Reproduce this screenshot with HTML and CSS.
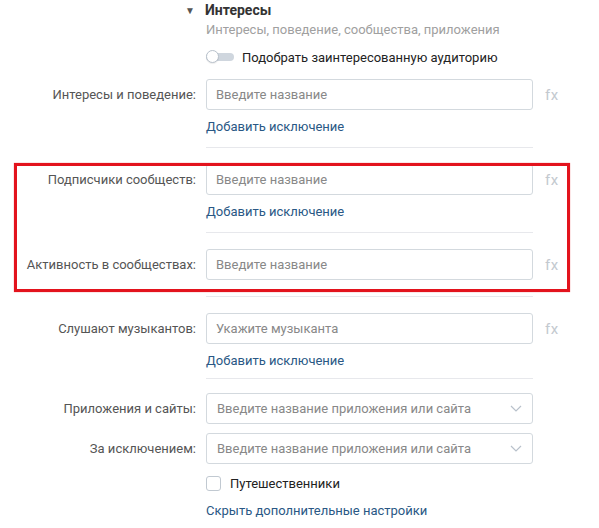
FILE: index.html
```html
<!DOCTYPE html>
<html lang="ru">
<head>
    <meta charset="UTF-8">
    <meta name="viewport" content="width=device-width, initial-scale=1.0">
    <title>Интересы</title>
    <link rel="stylesheet" href="styles.css">
</head>
<body>
    <div id="form">
        <!-- Section header -->
        <div class="head">
            <span class="head-arrow">&#9660;</span>
            <span class="head-title">Интересы</span>
        </div>
        <div class="head-sub">Интересы, поведение, сообщества, приложения</div>
        <div class="switch-row">
            <span class="switch"><span class="switch-knob"></span></span>
            <span>Подобрать заинтересованную аудиторию</span>
        </div>

        <div class="group">
            <div class="field">
                <label class="field-label">Интересы и поведение:</label>
                <input class="field-input" type="text" placeholder="Введите название">
                <span class="fx">fx</span>
            </div>
            <div class="field-sub"><a href="#" class="link">Добавить исключение</a></div>
            <div class="divider"></div>
        </div>

        <div class="group">
            <div class="field">
                <label class="field-label">Подписчики сообществ:</label>
                <input class="field-input" type="text" placeholder="Введите название">
                <span class="fx">fx</span>
            </div>
            <div class="field-sub"><a href="#" class="link">Добавить исключение</a></div>
            <div class="divider"></div>
        </div>

        <div class="group">
            <div class="field">
                <label class="field-label">Активность в сообществах:</label>
                <input class="field-input" type="text" placeholder="Введите название">
                <span class="fx">fx</span>
            </div>
            <div class="divider divider-tight"></div>
        </div>

        <div class="group">
            <div class="field">
                <label class="field-label">Слушают музыкантов:</label>
                <input class="field-input" type="text" placeholder="Укажите музыканта">
                <span class="fx">fx</span>
            </div>
            <div class="field-sub"><a href="#" class="link">Добавить исключение</a></div>
            <div class="divider divider-short"></div>
        </div>

        <div class="field">
            <label class="field-label">Приложения и сайты:</label>
            <div class="select">
                <span>Введите название приложения или сайта</span>
                <svg class="select-arrow" width="12" height="7" viewBox="0 0 12 7"><path d="M1 1l5 5 5-5" fill="none" stroke="#b8c1cb" stroke-width="1.2"/></svg>
            </div>
        </div>
        <div class="field field-next">
            <label class="field-label">За исключением:</label>
            <div class="select">
                <span>Введите название приложения или сайта</span>
                <svg class="select-arrow" width="12" height="7" viewBox="0 0 12 7"><path d="M1 1l5 5 5-5" fill="none" stroke="#b8c1cb" stroke-width="1.2"/></svg>
            </div>
        </div>

        <div class="field-sub check-row">
            <span class="checkbox"></span>
            <span>Путешественники</span>
        </div>
        <div class="field-sub more"><a href="#" class="link">Скрыть дополнительные настройки</a></div>

        <!-- Red highlight frame -->
        <div class="highlight"></div>
    </div>
</body>
</html>
```

FILE: styles.css
```css
/* General Styles */
body {
    margin: 0;
    background-color: #ffffff;
    font-family: Roboto, "Liberation Sans", Arial, sans-serif;
    font-size: 13px;
    color: #222222;
}

#form {
    position: relative;
    width: 599px;
    height: 528px;
    overflow: hidden;
}

/* Header */
.head {
    display: flex;
    align-items: center;
    height: 18px;
    margin-top: 1px;
    padding-left: 185px;
}

.head-arrow {
    font-size: 10px;
    color: #555555;
    width: 20px;
}

.head-title {
    font-weight: bold;
    color: #333333;
    font-size: 14px;
}

.head-sub {
    margin-top: 2px;
    padding-left: 206px;
    line-height: 18px;
    color: #a0a0a0;
}

.switch-row {
    display: flex;
    align-items: center;
    height: 18px;
    margin-top: 9px;
    padding-left: 206px;
    color: #222222;
}

.switch {
    position: relative;
    width: 28px;
    height: 8px;
    border-radius: 4px;
    background-color: #cfd6de;
    margin-right: 8px;
}

.switch-knob {
    position: absolute;
    left: 0;
    top: -3px;
    width: 13px;
    height: 13px;
    border-radius: 50%;
    background-color: #ffffff;
    border: 1px solid #b8c1cb;
    box-sizing: border-box;
    box-shadow: 0 1px 1px rgba(0, 0, 0, 0.08);
}

/* Fields */
.group {
    margin-top: 13px;
}

.group + .group {
    margin-top: 16px;
}

.field {
    display: flex;
    align-items: center;
    height: 31px;
}

.field-label {
    width: 206px;
    padding-right: 10px;
    box-sizing: border-box;
    text-align: right;
    color: #555555;
}

.field-input {
    width: 327px;
    height: 31px;
    box-sizing: border-box;
    border: 1px solid #d3d9de;
    border-radius: 3px;
    padding: 0 9px;
    font-family: inherit;
    font-size: 13px;
    color: #222222;
    outline: none;
}

.field-input::placeholder {
    color: #888888;
}

.fx {
    margin-left: 12px;
    color: #c3c9cf;
    font-size: 15px;
    letter-spacing: 0.5px;
}

.field-sub {
    padding-left: 206px;
}

.group .field-sub {
    margin-top: 8px;
    line-height: 18px;
}

.link {
    color: #2a5885;
    text-decoration: none;
}

.divider {
    margin: 11px 0 0 206px;
    width: 327px;
    height: 1px;
    background-color: #e7e8ec;
}

.divider-tight {
    margin-top: 16px;
}

.divider-short {
    margin-top: 8px;
}

/* Selects */
.group + .field {
    margin-top: 14px;
}

.select {
    display: flex;
    align-items: center;
    justify-content: space-between;
    width: 327px;
    height: 31px;
    box-sizing: border-box;
    border: 1px solid #d3d9de;
    border-radius: 3px;
    padding: 0 10px 0 10px;
    color: #888888;
}

.field-next {
    margin-top: 9px;
}

.check-row {
    display: flex;
    align-items: center;
    height: 18px;
    margin-top: 10px;
    color: #222222;
}

.checkbox {
    width: 15px;
    height: 15px;
    box-sizing: border-box;
    border: 1px solid #c1c9d1;
    border-radius: 3px;
    margin-right: 9px;
}

.more {
    margin-top: 10px;
    line-height: 18px;
}

/* Annotation frame */
.highlight {
    position: absolute;
    left: 14px;
    top: 163px;
    width: 556px;
    height: 129px;
    box-sizing: border-box;
    border: 3px solid #e3131d;
    box-shadow: 0 0 1px rgba(227, 19, 29, 0.6);
}
```
